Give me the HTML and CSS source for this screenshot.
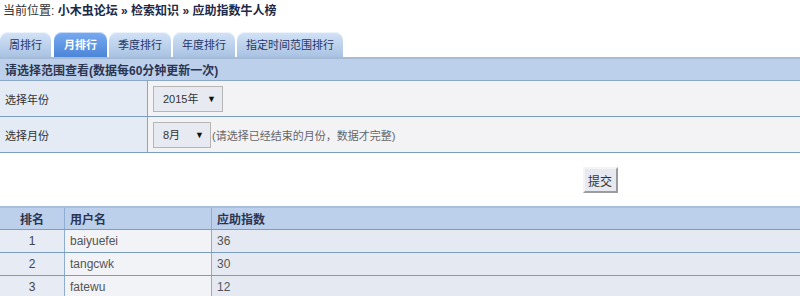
FILE: index.html
```html
<!DOCTYPE html>
<html lang="zh-CN">
<head>
<meta charset="utf-8">
<title>应助指数牛人榜</title>
<link rel="stylesheet" href="styles.css">
</head>
<body>
<div class="crumb">当前位置: <a href="#">小木虫论坛</a> <b>»</b> <a href="#">检索知识</a> <b>»</b> <a href="#">应助指数牛人榜</a></div>
<div class="tabs">
  <a class="tab" href="#">周排行</a>
  <a class="tab active" href="#">月排行</a>
  <a class="tab" href="#">季度排行</a>
  <a class="tab" href="#">年度排行</a>
  <a class="tab" href="#">指定时间范围排行</a>
</div>
<table class="form">
  <tr><th colspan="2">请选择范围查看(数据每60分钟更新一次)</th></tr>
  <tr>
    <td class="lbl">选择年份</td>
    <td class="val"><span class="sel year">2015年<span class="arr">▼</span></span></td>
  </tr>
  <tr>
    <td class="lbl">选择月份</td>
    <td class="val"><span class="sel month">8月<span class="arr">▼</span></span><span class="hint">(请选择已经结束的月份，数据才完整)</span></td>
  </tr>
</table>
<div class="actions">
  <div></div>
  <div class="btncell"><button class="btn">提交</button></div>
</div>
<table class="rank">
  <tr><th class="c1">排名</th><th class="c2">用户名</th><th class="c3">应助指数</th></tr>
  <tr><td class="c1">1</td><td class="c2">baiyuefei</td><td class="c3">36</td></tr>
  <tr><td class="c1">2</td><td class="c2">tangcwk</td><td class="c3">30</td></tr>
  <tr><td class="c1">3</td><td class="c2">fatewu</td><td class="c3">12</td></tr>
</table>
</body>
</html>
```

FILE: styles.css
```css
html, body {
  margin: 0;
  padding: 0;
  background: #fff;
}
body {
  font-family: "Liberation Sans", "Noto Sans CJK SC", sans-serif;
  font-size: 12px;
  color: #333;
}
.crumb {
  padding: 3px 3px 0;
  line-height: 16px;
  height: 29px;
  color: #333;
}
.crumb a, .crumb b {
  color: #1c2a48;
  font-weight: bold;
  text-decoration: none;
}
.tabs {
  display: flex;
  gap: 2px;
  height: 25px;
  align-items: flex-end;
}
.tab {
  display: block;
  height: 25px;
  line-height: 27px;
  padding: 0 9px;
  font-size: 11px;
  color: #1f3767;
  text-decoration: none;
  border-radius: 8px 8px 0 0;
  background: linear-gradient(#d3e3f7, #a9c2e2);
  box-shadow: inset 0 1px 0 rgba(255,255,255,0.6);
}
.tab:first-child { margin-right: 1px; }
.tab.active {
  color: #fff;
  font-weight: bold;
  background: linear-gradient(#77aaf0, #4d86d8);
  padding: 0 10px;
  margin-right: 0;
}
.form {
  width: 100%;
  border-collapse: collapse;
  border-top: 2px solid #a5bbd6;
  font-size: 11px;
}
.form th {
  height: 21px;
  padding: 0 5px;
  text-align: left;
  font-weight: bold;
  color: #2c3550;
  background: #bcd0ec;
  border-bottom: 1px solid #8ba8c9;
  font-size: 12px;
}
.form td {
  height: 35px;
  border-bottom: 1px solid #7b9dc2;
  padding: 0 5px;
}
.form .lbl {
  width: 137px;
  background: #e5ebf4;
  border-right: 1px solid #86a6c9;
  color: #333;
}
.form .val {
  background: #f3f3f6;
}
.val {
  white-space: nowrap;
}
.sel {
  position: relative;
  display: inline-block;
  vertical-align: middle;
  box-sizing: border-box;
  height: 26px;
  line-height: 24px;
  padding-left: 9px;
  border: 1px solid #b6b6b6;
  background: #e7eaf0;
  color: #333;
  font-size: 11px;
}
.sel.year { width: 70px; }
.sel.month { width: 58px; }
.arr {
  position: absolute;
  right: 6px;
  top: 0;
  font-size: 9px;
  color: #111;
}
.hint {
  vertical-align: middle;
  color: #666;
  margin-left: 1px;
}
.actions {
  display: grid;
  grid-template-columns: 1fr 1fr;
  padding: 14px 0 13px;
}
.btncell {
  display: flex;
  justify-content: center;
}
.btn {
  width: 35px;
  height: 26px;
  padding: 0;
  font-family: "Noto Sans CJK SC", sans-serif;
  font-size: 12px;
  color: #333;
  background: #e7e9f1;
  border: 2px solid;
  border-color: #f4f4f4 #9c9c9c #9c9c9c #f4f4f4;
}
.rank {
  width: 100%;
  border-collapse: collapse;
  border-top: 2px solid #a7bed8;
}
.rank th, .rank td {
  height: 22px;
  padding: 0 5px;
  text-align: left;
  border-bottom: 1px solid #7b9dc2;
  border-right: 1px solid #8fadd0;
}
.rank th {
  height: 21px;
  background: #bcd0ec;
  color: #2c3550;
  font-weight: bold;
}
.rank td { color: #555; }
.rank .c1 { width: 54px; text-align: center; }
.rank .c2 { width: 136px; }
.rank td.c1 { background: #e7ebf3; color: #444; }
.rank td.c2 { background: #f2f3f6; }
.rank td.c3 { background: #e4e9f2; border-right: none; }
.rank th.c3 { border-right: none; }
```
